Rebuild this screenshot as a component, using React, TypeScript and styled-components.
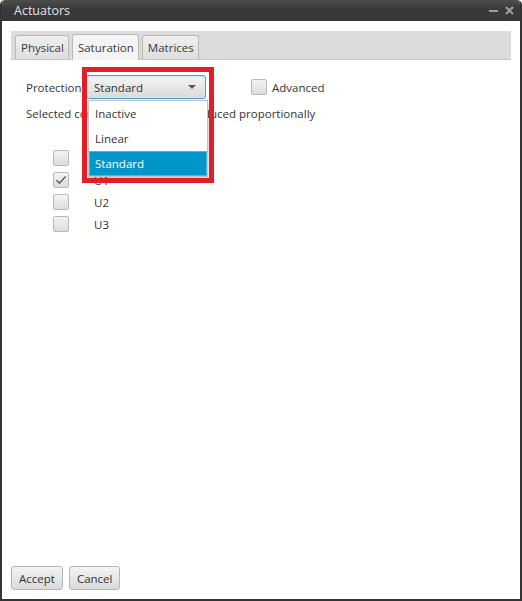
import React from 'react';
import styled, {createGlobalStyle, css} from "styled-components";

const GlobalStyle = createGlobalStyle`
    html, body {
        margin: 0;
        padding: 0;
        background: #ffffff;
    }
    body {
        font-family: 'Open Sans', 'Noto Sans', sans-serif;
        font-size: 11.5px;
        color: #333333;
    }
`

const channels = [
    {name: 'U0', checked: false},
    {name: 'U1', checked: true},
    {name: 'U2', checked: false},
    {name: 'U3', checked: false},
]

const options = ['Inactive', 'Linear', 'Standard']

const Check = ({checked}: {checked?: boolean}) => (
    <CheckBox>
        {checked && (
            <svg width="12" height="12" viewBox="0 0 12 12">
                <path d="M1.5 6.2 L4.5 9.2 L10.5 2.5" fill="none" stroke="#5a5a5a" strokeWidth="1.4"/>
            </svg>
        )}
    </CheckBox>
)

export default function App() {
    return (
        <>
            <GlobalStyle/>
            <Window>
                <TitleBar>
                    <Title>Actuators</Title>
                    <WindowIcons>
                        <svg width="9" height="9" viewBox="0 0 9 9">
                            <rect x="0" y="4" width="9" height="2" fill="#9c9c9c"/>
                        </svg>
                        <svg width="9" height="9" viewBox="0 0 9 9">
                            <path d="M1 1 L8 8 M8 1 L1 8" stroke="#9c9c9c" strokeWidth="2.2"/>
                        </svg>
                    </WindowIcons>
                </TitleBar>

                <Body>
                    <TabBar>
                        <Tab>Physical</Tab>
                        <Tab selected>Saturation</Tab>
                        <Tab>Matrices</Tab>
                    </TabBar>

                    <Content>
                        <ProtectionRow>
                            <Label>Protection</Label>
                            <Combo>
                                <span>Standard</span>
                                <Arrow/>
                            </Combo>
                            <CheckLabel>
                                <Check/>
                                <span>Advanced</span>
                            </CheckLabel>
                        </ProtectionRow>

                        <Note>Selected control signals will be reduced proportionally</Note>

                        <ChannelList>
                            {channels.map(c => (
                                <ChannelRow key={c.name}>
                                    <Check checked={c.checked}/>
                                    <span>{c.name}</span>
                                </ChannelRow>
                            ))}
                        </ChannelList>
                    </Content>

                    <Footer>
                        <Button>Accept</Button>
                        <Button>Cancel</Button>
                    </Footer>
                </Body>

                <DropList>
                    {options.map(o => (
                        <DropItem key={o} selected={o === 'Standard'}>{o}</DropItem>
                    ))}
                </DropList>
                <Highlight/>
            </Window>
        </>
    );
}

const Window = styled.div`
    position: relative;
    width: 522px;
    height: 601px;
    box-sizing: border-box;
    border: 2px solid #353535;
    border-top: none;
    border-radius: 5px 5px 0 0;
    display: flex;
    flex-direction: column;
    background: #ffffff;
    overflow: hidden;
`

const TitleBar = styled.div`
    height: 21px;
    margin: 0 -2px;
    padding: 0 8px 0 14px;
    background: linear-gradient(#4e4e4e, #3a3a3a 40%, #383838);
    border-radius: 5px 5px 0 0;
    display: flex;
    align-items: center;
    justify-content: space-between;
`

const Title = styled.div`
    color: #e4e4e4;
    font-size: 12.5px;
`

const WindowIcons = styled.div`
    display: flex;
    gap: 7px;
    align-items: center;
`

const Body = styled.div`
    flex: 1;
    display: flex;
    flex-direction: column;
    padding: 10px 9px 9px 9px;
`

const TabBar = styled.div`
    height: 29px;
    box-sizing: border-box;
    background: #dcdcdc;
    border-bottom: 1px solid #c6c6c6;
    display: flex;
    align-items: flex-end;
    gap: 3px;
    padding-left: 4px;
`

const Tab = styled.div<{selected?: boolean}>`
    height: 24px;
    box-sizing: border-box;
    padding: 0 4px 0 5px;
    display: flex;
    align-items: center;
    border: 1px solid #b9b9b9;
    border-bottom: none;
    border-radius: 3px 3px 0 0;
    color: #3a3a3a;
    background: linear-gradient(#f0f0f0, #dedede);
    ${p => p.selected && css`
        background: #f4f4f4;
        height: 26px;
        margin-bottom: -1px;
    `}
`

const Content = styled.div`
    flex: 1;
    padding: 15px 0 0 15px;
`

const ProtectionRow = styled.div`
    display: flex;
    align-items: center;
    height: 24px;
`

const Label = styled.span`
    width: 60px;
`

const Combo = styled.div`
    width: 120px;
    height: 24px;
    box-sizing: border-box;
    border: 1px solid #3fa2d4;
    border-radius: 3px;
    background: linear-gradient(#f4f4f4, #dadada);
    box-shadow: inset 0 0 0 1px #d6ecf7;
    display: flex;
    align-items: center;
    justify-content: space-between;
    padding: 0 9px 0 7px;
    color: #333;
`

const Arrow = styled.span`
    width: 0;
    height: 0;
    border-left: 4px solid transparent;
    border-right: 4px solid transparent;
    border-top: 4px solid #555;
`

const CheckLabel = styled.label`
    display: flex;
    align-items: center;
    gap: 5px;
    margin-left: 45px;
`

const CheckBox = styled.span`
    width: 16px;
    height: 16px;
    box-sizing: border-box;
    border: 1px solid #b9b9b9;
    border-radius: 2px;
    background: linear-gradient(#f4f4f4, #dcdcdc);
    display: inline-flex;
    align-items: center;
    justify-content: center;
`

const Note = styled.div`
    margin-top: 7px;
    line-height: 16px;
`

const ChannelList = styled.div`
    margin: 28px 0 0 27px;
    display: flex;
    flex-direction: column;
    gap: 6px;
`

const ChannelRow = styled.div`
    display: flex;
    align-items: center;
    gap: 25px;
    height: 16px;
`

const Footer = styled.div`
    display: flex;
    gap: 6px;
`

const Button = styled.button`
    height: 24px;
    padding: 0 7px;
    font: inherit;
    color: #333;
    border: 1px solid #b5b5b5;
    border-radius: 3px;
    background: linear-gradient(#f4f4f4, #dadada);
`

const DropList = styled.div`
    position: absolute;
    left: 86px;
    top: 100px;
    width: 120px;
    box-sizing: border-box;
    background: #ffffff;
    border: 1px solid #c4c4c4;
    box-shadow: 0 3px 6px rgba(0, 0, 0, 0.25);
    z-index: 2;
`

const DropItem = styled.div<{selected?: boolean}>`
    height: 25px;
    box-sizing: border-box;
    display: flex;
    align-items: center;
    padding-left: 6px;
    color: #333;
    ${p => p.selected && css`
        background: #0096c9;
        color: #ffffff;
        border: 1px solid #4db4dc;
        padding-left: 5px;
    `}
`

const Highlight = styled.div`
    position: absolute;
    left: 80px;
    top: 67px;
    width: 132px;
    height: 116px;
    box-sizing: border-box;
    border: 5px solid #e41e26;
    z-index: 3;
    pointer-events: none;
`
